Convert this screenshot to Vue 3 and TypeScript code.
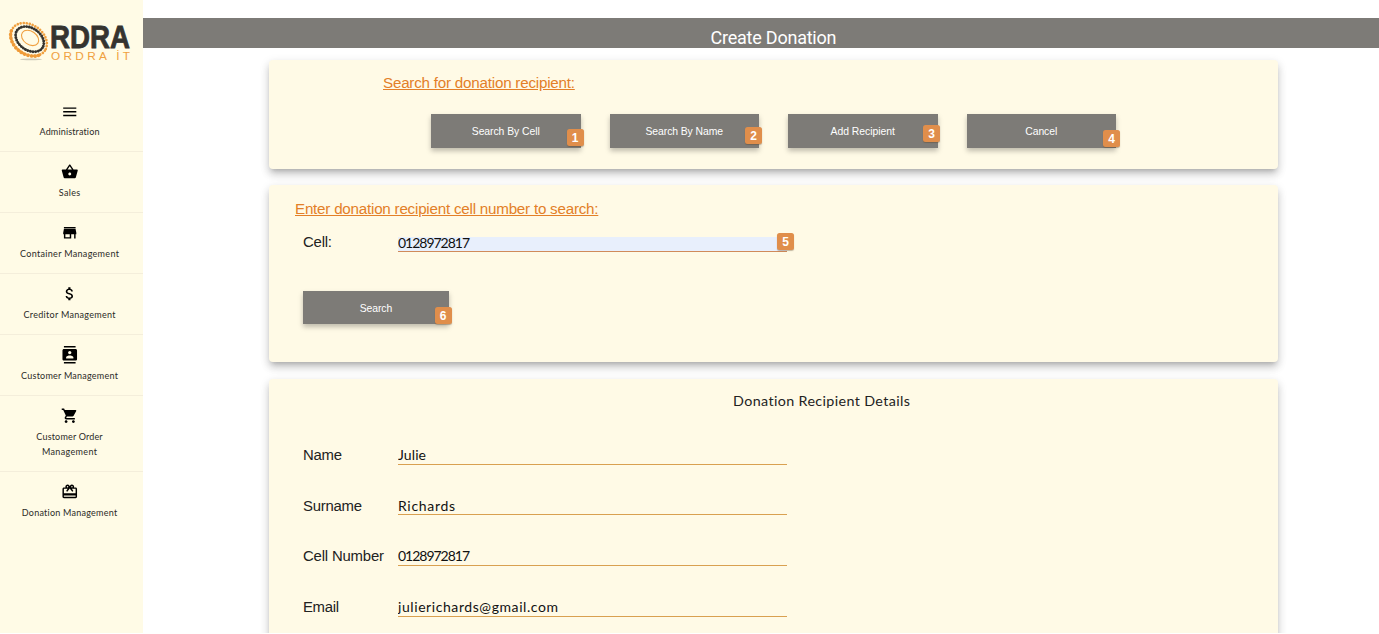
<script setup lang="ts">
import { ref } from 'vue'

interface NavItem {
  icon: string
  lines: { text: string; width: number }[]
}

const nav: NavItem[] = [
  { icon: 'M3 18h18v-2H3v2zm0-5h18v-2H3v2zm0-7v2h18V6H3z', lines: [{ text: 'Administration', width: 60 }] },
  {
    icon: 'M17.21 9l-4.38-6.56c-.19-.28-.51-.42-.83-.42-.32 0-.64.14-.83.43L6.79 9H2c-.55 0-1 .45-1 1 0 .09.01.18.04.27l2.54 9.27c.23.84 1 1.46 1.92 1.46h13c.92 0 1.69-.62 1.93-1.46l2.54-9.27L23 10c0-.55-.45-1-1-1h-4.79zM9 9l3-4.4L15 9H9zm3 8c-1.1 0-2-.9-2-2s.9-2 2-2 2 .9 2 2-.9 2-2 2z',
    lines: [{ text: 'Sales', width: 21.5 }],
  },
  {
    icon: 'M20 4H4v2h16V4zm1 10v-2l-1-5H4l-1 5v2h1v6h10v-6h4v6h2v-6h1zm-9 4H6v-4h6v4z',
    lines: [{ text: 'Container Management', width: 99 }],
  },
  {
    icon: 'M11.8 10.9c-2.27-.59-3-1.2-3-2.15 0-1.09 1.01-1.85 2.7-1.85 1.78 0 2.44.85 2.5 2.1h2.21c-.07-1.72-1.12-3.3-3.21-3.81V3h-3v2.16c-1.94.42-3.5 1.68-3.5 3.61 0 2.31 1.91 3.46 4.7 4.13 2.5.6 3 1.48 3 2.41 0 .69-.49 1.79-2.7 1.79-2.06 0-2.87-.92-2.98-2.1h-2.2c.12 2.19 1.76 3.42 3.68 3.83V21h3v-2.15c1.95-.37 3.5-1.5 3.5-3.55 0-2.84-2.43-3.81-4.7-4.4z',
    lines: [{ text: 'Creditor Management', width: 92 }],
  },
  {
    icon: 'M20 0H4v2h16V0zM4 24h16v-2H4v2zM20 4H4c-1.1 0-2 .9-2 2v12c0 1.1.9 2 2 2h16c1.1 0 2-.9 2-2V6c0-1.1-.9-2-2-2zm-8 2.75c1.24 0 2.25 1.01 2.25 2.25s-1.01 2.25-2.25 2.25S9.75 10.24 9.75 9 10.76 6.75 12 6.75zM17 17H7v-1.5c0-1.67 3.33-2.5 5-2.5s5 .83 5 2.5V17z',
    lines: [{ text: 'Customer Management', width: 97 }],
  },
  {
    icon: 'M7 18c-1.1 0-1.99.9-1.99 2S5.9 22 7 22s2-.9 2-2-.9-2-2-2zM1 2v2h2l3.6 7.59-1.35 2.45c-.16.28-.25.61-.25.96 0 1.1.9 2 2 2h12v-2H7.42c-.14 0-.25-.11-.25-.25l.03-.12.9-1.63h7.45c.75 0 1.41-.41 1.75-1.03l3.58-6.49c.08-.14.12-.31.12-.48 0-.55-.45-1-1-1H5.21l-.94-2H1zm16 16c-1.1 0-1.99.9-1.99 2s.89 2 1.99 2 2-.9 2-2-.9-2-2-2z',
    lines: [{ text: 'Customer Order', width: 66.5 }, { text: 'Management', width: 55 }],
  },
  {
    icon: 'M20 6h-2.18c.11-.31.18-.65.18-1 0-1.66-1.34-3-3-3-1.05 0-1.96.54-2.5 1.35l-.5.67-.5-.68C10.96 2.54 10.05 2 9 2 7.34 2 6 3.34 6 5c0 .35.07.69.18 1H4c-1.11 0-1.99.89-1.99 2L2 19c0 1.11.89 2 2 2h16c1.11 0 2-.89 2-2V8c0-1.11-.89-2-2-2zm-5-2c.55 0 1 .45 1 1s-.45 1-1 1-1-.45-1-1 .45-1 1-1zM9 4c.55 0 1 .45 1 1s-.45 1-1 1-1-.45-1-1 .45-1 1-1zm11 15H4v-2h16v2zm0-5H4V8h5.08L7 10.83 8.62 12 11 8.76l1-1.36 1 1.36L15.38 12 17 10.83 14.92 8H20v6z',
    lines: [{ text: 'Donation Management', width: 95.5 }],
  },
]

const actions = [
  { label: 'Search By Cell', width: 68, badge: 1 },
  { label: 'Search By Name', width: 77.5, badge: 2 },
  { label: 'Add Recipient', width: 64.5, badge: 3 },
  { label: 'Cancel', width: 32, badge: 4 },
]

const cell = ref('0128972817')
const details = ref([
  { label: 'Name', lw: 39, value: 'Julie', width: 28 },
  { label: 'Surname', lw: 59, value: 'Richards', width: 57 },
  { label: 'Cell Number', lw: 81, value: '0128972817', width: 72 },
  { label: 'Email', lw: 36, value: 'julierichards@gmail.com', width: 160 },
])

// Tracks text out (or in) so that it spans the given width in pixels.
const vFit = {
  mounted(el: HTMLElement, binding: { value: number }) {
    const text = el instanceof HTMLInputElement ? el.value : (el.textContent ?? '').trim()
    const ctx = document.createElement('canvas').getContext('2d')
    if (!ctx || text.length < 2) return
    const cs = getComputedStyle(el)
    ctx.font = `${cs.fontWeight} ${cs.fontSize} ${cs.fontFamily}`
    const gap = (binding.value - ctx.measureText(text).width) / (text.length - 1)
    el.style.letterSpacing = `${gap.toFixed(3)}px`
    if (!(el instanceof HTMLInputElement)) el.style.marginRight = `${(-gap).toFixed(3)}px`
  },
}
</script>

<template>
  <div class="app">
    <aside class="sidebar">
      <svg class="logo" width="143" height="91" viewBox="0 0 143 91">
        <ellipse cx="31" cy="59.4" rx="11" ry="0.9" fill="#cfcbbb" />
        <g fill="none" stroke-linecap="round" transform="rotate(35 29 39.5)">
          <ellipse cx="28.8" cy="39.6" rx="19.6" ry="14.6" stroke="#f0a040" stroke-width="2.7" stroke-dasharray="0.01 3" />
          <path d="M46 47A19.6 14.6 0 0 1 9.5 42" stroke="#ef9a38" stroke-width="3.6" stroke-dasharray="0.01 3.6" />
          <ellipse cx="29.4" cy="38.8" rx="15.4" ry="11" stroke="#35332f" stroke-width="2.9" stroke-dasharray="0.01 2.6" />
          <ellipse cx="29" cy="37.6" rx="9.4" ry="6.6" stroke="#f0a040" stroke-width="1.1" />
        </g>
        <text class="logo-main" x="50" y="48.3" textLength="80" lengthAdjust="spacingAndGlyphs">RDRA</text>
        <text class="logo-sub" x="51" y="60" textLength="79">ORDRA İT</text>
      </svg>
      <nav>
        <a v-for="item in nav" :key="item.lines[0].text" class="nav-item">
          <svg class="nav-icon" viewBox="0 0 24 24"><path :d="item.icon" /></svg>
          <span v-for="line in item.lines" :key="line.text" class="nav-line">
            <span v-fit="line.width">{{ line.text }}</span>
          </span>
        </a>
      </nav>
    </aside>

    <main class="main">
      <header class="bar"><h1 v-fit="126">Create Donation</h1></header>

      <section class="card search-card">
        <h2><span v-fit="192">Search for donation recipient:</span></h2>
        <div class="actions">
          <button v-for="a in actions" :key="a.label" class="btn">
            <span v-fit="a.width">{{ a.label }}</span>
            <i class="badge" :class="'badge-' + a.badge">{{ a.badge }}</i>
          </button>
        </div>
      </section>

      <section class="card cell-card">
        <h2><span v-fit="303.5">Enter donation recipient cell number to search:</span></h2>
        <div class="field">
          <label><span v-fit="29">Cell:</span></label>
          <div class="control">
            <input v-model="cell" v-fit="72" class="filled" />
            <i class="badge badge-5">5</i>
          </div>
        </div>
        <button class="btn search-btn">
          <span v-fit="32.5">Search</span>
          <i class="badge badge-6">6</i>
        </button>
      </section>

      <section class="card details-card">
        <h3><span v-fit="177">Donation Recipient Details</span></h3>
        <div v-for="f in details" :key="f.label" class="field detail">
          <label><span v-fit="f.lw">{{ f.label }}</span></label>
          <div class="control"><input v-model="f.value" v-fit="f.width" /></div>
        </div>
      </section>
    </main>
  </div>
</template>

<style>
html,
body {
  background: #fff;
  overflow: hidden;
}
</style>

<style scoped>
.app {
  display: flex;
  width: 1379px;
  height: 633px;
  overflow: hidden;
  font-family: 'Liberation Sans', Arial, sans-serif;
  color: #222;
}
.app * {
  box-sizing: border-box;
}
.sidebar {
  width: 143px;
  flex: none;
  background: #fffbe6;
}
.logo {
  display: block;
}
.logo-main {
  font: bold 31px 'Liberation Sans', Arial, sans-serif;
  fill: #35332f;
  stroke: #35332f;
  stroke-width: 0.8;
}
.logo-sub {
  font: 11.8px 'Liberation Sans', Arial, sans-serif;
  fill: #f0a040;
}
.nav-item {
  display: flex;
  flex-direction: column;
  align-items: center;
  padding: 12px 4px 11.5px 0;
  border-bottom: 1px solid #f4eedb;
}
.nav-item:last-child {
  border-bottom: 0;
}
.nav-icon {
  width: 17.5px;
  height: 17.5px;
  margin: -0.5px 0 4px;
  fill: #000;
}
.nav-item + .nav-item {
  padding-bottom: 12px;
}
.nav-line {
  font: 9px/15px Lato, sans-serif;
  color: #2b2a26;
  white-space: nowrap;
}
.main {
  flex: 1;
  padding-top: 18px;
}
.bar {
  height: 29.7px;
  background: #7d7b77;
  text-align: center;
}
h1 {
  display: inline-block;
  margin: 0;
  padding-left: 25px;
  font: 400 18px/39px Roboto, sans-serif;
  color: #fff;
}
.card {
  width: 1009px;
  margin-left: 126px;
  border-radius: 4px;
  background: #fffae6;
  box-shadow: 0 4px 5px -3px rgba(0, 0, 0, 0.2), 0 6px 9px 0 rgba(0, 0, 0, 0.13), 0 3px 10px 1px rgba(0, 0, 0, 0.1);
}
h2 {
  margin: 0;
  font: 400 15.2px/20px 'Liberation Sans', Arial, sans-serif;
  color: #e37f28;
  text-decoration: underline;
  white-space: nowrap;
}
.search-card {
  height: 109px;
  margin-top: 12.3px;
  padding: 13px 0 0 114px;
}
.actions {
  display: flex;
  gap: 29px;
  margin: 21.3px 0 0 48px;
}
.btn {
  position: relative;
  width: 149.5px;
  height: 33.3px;
  padding: 0;
  border: 0;
  background: #7d7b77;
  box-shadow: 0 3px 5px rgba(0, 0, 0, 0.25);
  color: #fff;
  font: 10.4px/35px 'Liberation Sans', Arial, sans-serif;
}
.badge {
  position: absolute;
  width: 17px;
  height: 17px;
  border-radius: 2.5px;
  background: #e08e4b;
  box-shadow: 0 1px 1px rgba(90, 60, 30, 0.35);
  color: #fff;
  font: bold 12px/18px 'Liberation Sans', Arial, sans-serif;
  letter-spacing: 0;
  text-align: center;
}
.badge-1 { left: 135.5px; top: 15px; }
.badge-2 { left: 135.5px; top: 13px; }
.badge-3 { left: 135px; top: 11px; }
.badge-4 { left: 136.5px; top: 15.5px; }
.badge-5 { left: 379px; top: -4px; }
.badge-6 { left: 131.5px; top: 16px; }
.cell-card {
  height: 177px;
  margin-top: 16px;
  padding: 14px 0 0 26px;
}
.field {
  display: flex;
  align-items: flex-start;
}
.cell-card .field {
  margin: 18px 0 0 8px;
  height: 24px;
}
label {
  width: 95px;
  flex: none;
  font-size: 14.9px;
  line-height: 20px;
  white-space: nowrap;
}
.cell-card label {
  margin-top: -5px;
}
.control {
  position: relative;
  width: 389px;
}
input {
  display: block;
  width: 389px;
  height: 18px;
  padding: 0 0 1.5px;
  border: 0;
  border-bottom: 1px solid #d9a050;
  outline: 0;
  background: transparent;
  color: #111;
  font: 14px/15px Lato, sans-serif;
}
input.filled {
  height: 15px;
  padding-bottom: 3px;
  background: #e8effc;
  border-bottom-color: #d08a5a;
}
.search-btn {
  display: block;
  width: 146px;
  height: 33px;
  margin: 30px 0 0 8px;
}
.details-card {
  height: 300px;
  margin-top: 17px;
  padding: 12px 0 0 34px;
}
h3 {
  width: 907px;
  margin: 0;
  padding-left: 130px;
  font: 400 14.3px/20px Lato, sans-serif;
  color: #222;
  text-align: center;
}
.detail {
  height: 50.6px;
}
h3 + .detail {
  margin-top: 34px;
}
.detail .control {
  padding-top: 1.8px;
}
</style>
